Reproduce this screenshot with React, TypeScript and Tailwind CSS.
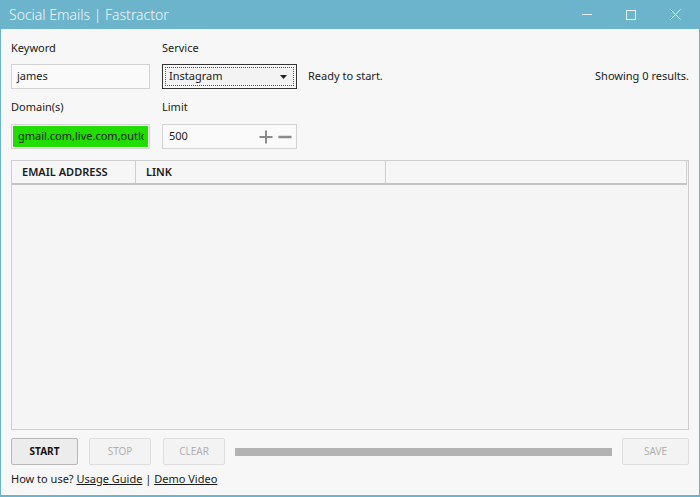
import React from "react";

const font = { fontFamily: '"Segoe UI", "Noto Sans", "Open Sans", sans-serif' };

export default function App() {
  return (
    <div
      className="w-[700px] h-[497px] bg-[#6cb4cc] flex flex-col px-[1px] pb-[2px] overflow-hidden"
      style={font}
    >
      {/* Title bar */}
      <div className="h-[29px] flex items-center justify-between shrink-0">
        <div className="pl-[8px] text-[14px] font-light text-[#eef8fb] leading-none">
          Social Emails | Fastractor
        </div>
        <div className="flex items-center h-full pr-[2px]">
          <div className="w-[44px] h-full flex items-center justify-center">
            <div className="w-[10px] h-[1px] bg-[#e4f3f8]" />
          </div>
          <div className="w-[44px] h-full flex items-center justify-center">
            <div className="w-[10px] h-[10px] border border-[#e4f3f8]" />
          </div>
          <div className="w-[44px] h-full flex items-center justify-center">
            <svg width="11" height="11" viewBox="0 0 11 11">
              <path d="M0.5 0.5 L10.5 10.5 M10.5 0.5 L0.5 10.5" stroke="#e4f3f8" strokeWidth="1" />
            </svg>
          </div>
        </div>
      </div>

      {/* Body */}
      <div className="flex-1 bg-[#f7f7f7] px-[10px] pt-[10px] flex flex-col text-[11px] text-[#1a1a1a]">
        {/* Labels row 1 */}
        <div className="flex h-[16px] leading-[16px] mt-[1px]">
          <div className="w-[151px]">Keyword</div>
          <div>Service</div>
        </div>
        {/* Inputs row 1 */}
        <div className="flex items-center mt-[8px] h-[25px]">
          <div className="w-[139px] h-[25px] border border-[#d2d2d2] bg-[#fafafa] flex items-center pl-[5px]">
            james
          </div>
          <div className="ml-[12px] w-[135px] h-[25px] border border-[#333] p-[2px]">
            <div className="w-full h-full border border-dotted border-[#555] flex items-center justify-between pl-[3px] pr-[6px] bg-[#f3f3f3]">
              <span>Instagram</span>
              <svg width="7" height="4" viewBox="0 0 7 4">
                <path d="M0 0 L7 0 L3.5 4 Z" fill="#222" />
              </svg>
            </div>
          </div>
          <div className="ml-[11px]">Ready to start.</div>
          <div className="ml-auto">Showing 0 results.</div>
        </div>
        {/* Labels row 2 */}
        <div className="flex h-[16px] leading-[16px] mt-[10px]">
          <div className="w-[151px]">Domain(s)</div>
          <div>Limit</div>
        </div>
        {/* Inputs row 2 */}
        <div className="flex items-center mt-[9px] h-[25px]">
          <div className="w-[139px] h-[25px] border border-[#d2d2d2] p-[1px] overflow-hidden">
            <div className="w-full h-full bg-[#22dd00] flex items-center pl-[5px] overflow-hidden whitespace-nowrap">
              <span className="block w-[126px] overflow-hidden">gmail.com,live.com,outlo</span>
            </div>
          </div>
          <div className="ml-[12px] w-[135px] h-[25px] border border-[#d2d2d2] bg-[#fafafa] flex items-center pl-[6px] pr-[4px]">
            <span>500</span>
            <div className="ml-auto flex items-center gap-[5px]">
              <svg width="14" height="14" viewBox="0 0 14 14">
                <path d="M7 0.5 V13.5 M0.5 7 H13.5" stroke="#8a8a8a" strokeWidth="2" />
              </svg>
              <svg width="14" height="14" viewBox="0 0 14 14">
                <path d="M0.5 7 H13.5" stroke="#8a8a8a" strokeWidth="2.5" />
              </svg>
            </div>
          </div>
        </div>

        {/* Table */}
        <div className="mt-[11px] h-[270px] border border-[#cfcfcf] bg-[#f5f5f5] flex flex-col">
          <div className="h-[24px] flex border-b-2 border-[#c4c4c4] bg-[#f6f6f6] mr-[1px]">
            <div className="w-[124px] border-r border-[#cfcfcf] flex items-center pl-[10px] font-semibold">
              EMAIL ADDRESS
            </div>
            <div className="w-[250px] border-r border-[#cfcfcf] flex items-center pl-[10px] font-semibold">
              LINK
            </div>
            <div className="flex-1 border-r border-[#cfcfcf]" />
          </div>
          <div className="flex-1" />
        </div>

        {/* Buttons row */}
        <div className="flex items-center mt-[8px] h-[27px]">
          <div className="w-[67px] h-[27px] border border-[#b8b8b8] bg-[#ececec] rounded-[2px] flex items-center justify-center text-[10px] font-bold text-[#111]">
            START
          </div>
          <div className="ml-[11px] w-[62px] h-[27px] border border-[#dedede] bg-[#f3f3f3] rounded-[2px] flex items-center justify-center text-[10px] text-[#b0b0b0]">
            STOP
          </div>
          <div className="ml-[12px] w-[62px] h-[27px] border border-[#dedede] bg-[#f3f3f3] rounded-[2px] flex items-center justify-center text-[10px] text-[#b0b0b0]">
            CLEAR
          </div>
          <div className="ml-[10px] w-[377px] h-[8px] bg-[#b3b3b3]" />
          <div className="ml-auto w-[67px] h-[27px] border border-[#dedede] bg-[#f3f3f3] rounded-[2px] flex items-center justify-center text-[10px] text-[#b0b0b0]">
            SAVE
          </div>
        </div>

        {/* Footer */}
        <div className="mt-[6px] leading-[16px]">
          How to use? <span className="underline">Usage Guide</span> | <span className="underline">Demo Video</span>
        </div>
      </div>
    </div>
  );
}
